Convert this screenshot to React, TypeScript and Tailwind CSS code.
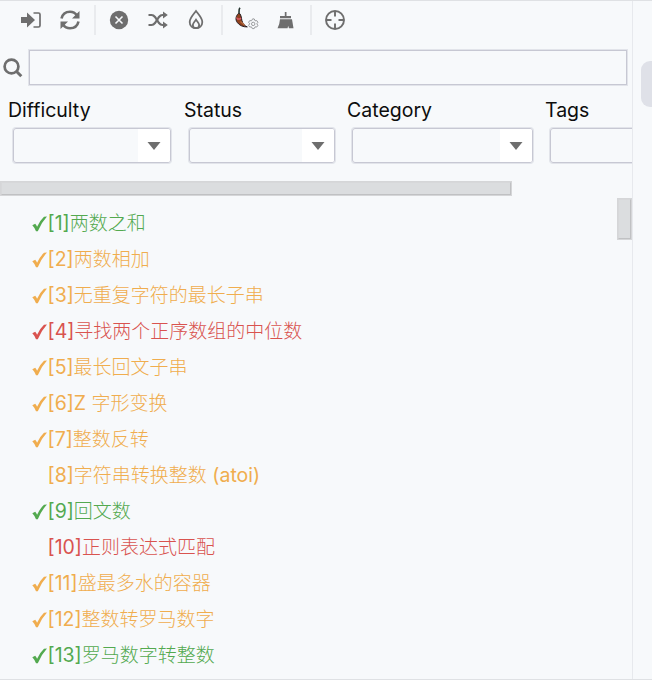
import React from "react";

type Level = "easy" | "medium" | "hard";

const levelClass: Record<Level, string> = {
  easy: "text-[#53a94f]",
  medium: "text-[#f0ad4e]",
  hard: "text-[#d9534f]",
};

const problems: { id: number; title: string; level: Level; done: boolean }[] = [
  { id: 1, title: "两数之和", level: "easy", done: true },
  { id: 2, title: "两数相加", level: "medium", done: true },
  { id: 3, title: "无重复字符的最长子串", level: "medium", done: true },
  { id: 4, title: "寻找两个正序数组的中位数", level: "hard", done: true },
  { id: 5, title: "最长回文子串", level: "medium", done: true },
  { id: 6, title: "Z 字形变换", level: "medium", done: true },
  { id: 7, title: "整数反转", level: "medium", done: true },
  { id: 8, title: "字符串转换整数 (atoi)", level: "medium", done: false },
  { id: 9, title: "回文数", level: "easy", done: true },
  { id: 10, title: "正则表达式匹配", level: "hard", done: false },
  { id: 11, title: "盛最多水的容器", level: "medium", done: true },
  { id: 12, title: "整数转罗马数字", level: "medium", done: true },
  { id: 13, title: "罗马数字转整数", level: "easy", done: true },
];

const filters = [
  { label: "Difficulty", cell: "w-[176px]", box: "w-[158px]" },
  { label: "Status", cell: "w-[163px]", box: "w-[146px]" },
  { label: "Category", cell: "w-[198px]", box: "w-[181px]" },
  { label: "Tags", cell: "w-[176px]", box: "w-[158px]" },
];

function Tool({ children }: { children: React.ReactNode }) {
  return (
    <button className="flex h-full w-[39px] shrink-0 items-center justify-center text-[#6e6e6e]">
      <svg width="26" height="26" viewBox="0 0 26 26" fill="none" stroke="currentColor">
        {children}
      </svg>
    </button>
  );
}

function Divider() {
  return (
    <div className="flex w-[10px] shrink-0 justify-end pr-[3px]">
      <div className="h-[30px] w-[2px] bg-[#e9ebee]" />
    </div>
  );
}

function Toolbar() {
  return (
    <div className="flex h-[38px] items-center pl-[11px]">
      <Tool>
        <path d="M3 10h6V5.500l8 7.500-8 7.500V16H3z" fill="currentColor" stroke="none" />
        <path d="M15.500 6H20.500q1.500 0 1.500 1.500v11q0 1.500-1.500 1.500H15.500" strokeWidth="1.700" />
      </Tool>
      <Tool>
        <path d="M4.500 11.500C5.500 7 9 4.700 13 4.700c3 0 5.300 1.300 7 3.800M21.500 14.500C20.500 19 17 21.300 13 21.300c-3 0-5.300-1.300-7-3.800" strokeWidth="2.600" />
        <path d="M22.500 4v7.500H15zM3.500 22v-7.500H11z" fill="currentColor" stroke="none" />
      </Tool>
      <Divider />
      <Tool>
        <circle cx="13" cy="13" r="9.200" fill="currentColor" stroke="none" />
        <path d="M9.500 9.500l7 7m0-7l-7 7" stroke="#f7f9fb" strokeWidth="1.600" />
      </Tool>
      <Tool>
        <path d="M3.500 8h3q2 0 3.500 2l4 6q1.500 2 3.500 2H19M3.500 18h3q2 0 3.500-2l4-6q1.500-2 3.500-2H19" strokeWidth="2.200" />
        <path d="M18 4.500L22.800 8 18 11.500zM18 14.500l4.800 3.500-4.800 3.500z" fill="currentColor" stroke="none" />
      </Tool>
      <Tool>
        <path d="M12 4C9 8 5.700 11.200 5.700 15c0 4 2.900 6.200 6.300 6.200s6.300-2.200 6.300-6.200C18.300 11.200 15 8 12 4z" strokeWidth="1.800" />
        <path d="M12 12.700c-1.300 2-3.200 3.500-3.200 5.300 0 2 1.500 3.200 3.200 3.200s3.200-1.200 3.200-3.200c0-1.800-1.900-3.300-3.200-5.300z" strokeWidth="1.800" />
      </Tool>
      <Divider />
      <Tool>
        <path d="M5.300 6.500C3 8.800 2 12.500 4.300 15.500c2 2.900 6 4.600 10 4.400-2.200-.8-3.600-2.300-4.700-4.400C8.300 13 8.800 9.500 7 6.800z" fill="#91421e" stroke="#241c20" strokeWidth="1" />
        <path d="M6 6.500C6.200 4.500 5.500 2.500 7 .8" stroke="#25342f" strokeWidth="1.600" />
        <path d="M3.500 10.500l1 1.500h2.500l1-1" stroke="#df5a69" strokeWidth="1.300" />
        <path d="M7.500 14.500l4 3.500" stroke="#bd7041" strokeWidth="1.100" />
        <path d="M19.700 11.800l1.600.2.700 1.800 1.800-.2 1.100 1.700-1.100 1.500 1.100 1.500-1.100 1.700-1.800-.1-.8 1.700h-1.900l-.8-1.700-1.800.1-1.100-1.700 1.100-1.500-1.100-1.500 1.100-1.700 1.800.2z" stroke="#999b9d" strokeWidth="1" />
        <circle cx="20.200" cy="16.900" r="1.700" stroke="#999b9d" strokeWidth="1" />
      </Tool>
      <Tool>
        <path d="M12.800 5h1.700v4h4.500v2.300H8V9h4.800z" fill="currentColor" stroke="none" />
        <path d="M8 12.300h12l1.500 9H17l-.9-2.500-.5 2.500H5.500q2.200-4 2.500-9z" fill="currentColor" stroke="none" />
      </Tool>
      <div className="w-px" />
      <Divider />
      <Tool>
        <circle cx="13" cy="13" r="9" strokeWidth="1.900" />
        <path d="M13 4v5.500M13 16.500V22M4 13h5.500M16.500 13H22" strokeWidth="1.900" />
      </Tool>
    </div>
  );
}

function SearchRow() {
  return (
    <div className="mt-[11px] flex h-[35px] items-center">
      <svg className="ml-[2px] mr-[5px] shrink-0" width="22" height="22" viewBox="0 0 22 22" fill="none" stroke="#6e6e6e">
        <circle cx="9.500" cy="9.500" r="6.900" strokeWidth="2.700" />
        <path d="M14.300 14.300l5 5" strokeWidth="3" />
      </svg>
      <input
        aria-label="Search"
        className="h-[35px] w-[598px] border border-[#c7c8d3] bg-[#f7f9fb] shadow-[0_0_0_1px_#e2e4ea] outline-none"
      />
    </div>
  );
}

function Filters() {
  return (
    <div className="mt-[10px] flex h-[69px] w-[632px] overflow-hidden pl-[8px]">
      {filters.map((f) => (
        <div key={f.label} className={`${f.cell} shrink-0`}>
          <div className="h-[33px] text-[19.5px] leading-[31px] text-[#0d0d0d]">{f.label}</div>
          <div className={`${f.box} ml-[5px] flex h-[35px] overflow-hidden rounded-[3px] border border-[#c7c8d3] shadow-[0_0_0_1px_#e2e4ea]`}>
            <div className="flex-1" />
            <div className="flex w-[32px] items-center justify-center bg-white">
              <svg width="14" height="8" viewBox="0 0 14 8">
                <path d="M.5 0h13L7 8z" fill="#6e6e6e" />
              </svg>
            </div>
          </div>
        </div>
      ))}
    </div>
  );
}

function Thumb({ size }: { size: string }) {
  return (
    <div className={`${size} border border-[#d5d6d8]`}>
      <div className="h-full w-full border border-b-[#c0c1c3] border-l-[#d7d8da] border-r-[#c0c1c3] border-t-[#d7d8da] bg-[#dbdddf]" />
    </div>
  );
}

function ProblemList() {
  return (
    <div className="flex h-[481px] justify-between">
      <ul className="pt-[8px]">
        {problems.map((p) => (
          <li key={p.id} className={`flex h-[36px] items-center whitespace-pre pl-[32px] text-[19.5px] ${levelClass[p.level]}`}>
            <span className="flex w-[15.500px] shrink-0">
              {p.done && (
                <svg width="15" height="16" viewBox="0 0 15 16" fill="currentColor">
                  <path d="M.3 9.300L3.200 7.700q1.300 1.300 1.900 3Q8 4.500 12 .8L15 .5Q9 7 5.800 15.300H4Q2.500 11.500.3 9.300z" />
                </svg>
              )}
            </span>
            <span>[{p.id}]</span>
            {p.title.split(/([ -~]+)/).filter(Boolean).map((run, i) => (
              <span key={i} className={/^[ -~]/.test(run) ? "" : "text-[19px] font-light"}>
                {run}
              </span>
            ))}
          </li>
        ))}
      </ul>
      <Thumb size="h-[42px] w-[15px]" />
    </div>
  );
}

export default function App() {
  return (
    <div className="flex h-[680px] w-[652px] overflow-hidden border-b border-t border-b-[#dfe1e4] border-t-[#dfe1e4] bg-[#f7f9fb] font-['Inter','Noto_Sans_CJK_SC',sans-serif]">
      <main className="w-[633px] shrink-0 border-r border-[#e7e9ed]">
        <Toolbar />
        <SearchRow />
        <Filters />
        <div className="h-[17px]" />
        <Thumb size="h-[15px] w-[512px]" />
        <div className="h-[2px]" />
        <ProblemList />
      </main>
      <aside className="flex-1 pl-[8px] pt-[60px]">
        <div className="h-[46px] rounded-l-[9px] bg-[#dfe1e8]" />
      </aside>
    </div>
  );
}
